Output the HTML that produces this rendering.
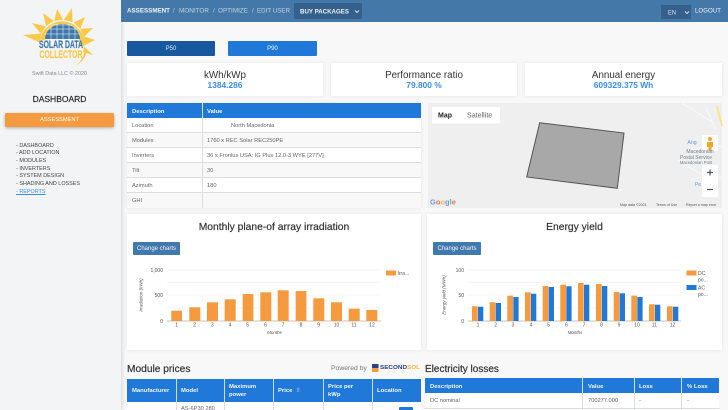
<!DOCTYPE html>
<html><head><meta charset="utf-8"><style>
html,body{margin:0;padding:0;width:728px;height:410px;overflow:hidden;background:#f8f8f8}
body{font-family:"Liberation Sans",sans-serif;position:relative;filter:blur(.35px)}
.a{position:absolute;white-space:nowrap}
.c{text-align:center}
.card{position:absolute;background:#fff;box-shadow:0 0 4px rgba(0,0,0,.08)}
.cell{position:absolute;font-size:5.7px;color:#666;line-height:16.5px;height:15px;white-space:nowrap}
.line{position:absolute;background:#ddd}
.hd{position:absolute;background:#2079d9}
.th{position:absolute;color:#f2f7fd;font-weight:bold;font-size:5.9px;white-space:nowrap;line-height:8px}
.nav{position:absolute;left:16px;font-size:5.45px;line-height:8px;height:8px;color:#444;white-space:nowrap}
.tt{-webkit-text-stroke:.2px #333;color:#333}
svg{position:absolute;left:0;top:0}
svg text{font-family:"Liberation Sans",sans-serif}
</style></head><body>

<div class="a" style="left:0;top:0;width:121px;height:410px;background:#f2f4f6;box-shadow:1px 0 4px rgba(0,0,0,.15)"></div>
<div class="a" style="left:121px;top:0;width:607px;height:22px;background:#4478a8"></div>

<svg width="121" height="70" viewBox="0 0 121 70">
<path fill="#fbc94a" d="M23 35L41.200 33.600 39.600 42.400ZM32 23L45.800 26.400 41 34ZM43 13L53.700 21 46.100 26ZM57 9L63.100 19.500 54.300 20.900ZM72 8L72.500 22.200 63.900 19.600ZM85 17L80.300 28.800 73.700 22.600ZM93 28L83.800 37.100 80.200 28.900ZM95 40L84.300 45.200 83.700 36.200ZM93 55L83 52 84 46.500ZM76 66Q83 60 85 50L87 51Q85 60 76 66Z"/>
<path fill="none" stroke="#fbc94a" stroke-width="5" d="M42.500 40A20 20 0 0 1 82 46"/>
<path fill="#3f78ad" d="M45 39A17.500 15 0 0 1 80 39Z"/>
<path stroke="#fff" stroke-width=".5" fill="none" d="M45 34H80M47 29H78M52 25H72M51 25V39M57 24V39M63 24V39M69 24V39M75 26V39"/>
<text x="39" y="48" font-size="11" font-weight="bold" fill="#3f78ad" stroke="#3f78ad" stroke-width=".2" textLength="44" lengthAdjust="spacingAndGlyphs">SOLAR DATA</text>
<text x="39.500" y="58" font-size="11" font-weight="bold" fill="#fbc94a" stroke="#fbc94a" stroke-width=".2" textLength="43" lengthAdjust="spacingAndGlyphs">COLLECTOR</text>
</svg>

<div class="a c" style="left:0;width:119px;top:71px;font-size:5.400px;color:#888">Swift Data LLC © 2020</div>
<div class="a c" style="left:0;width:119px;top:94px;font-size:8.500px;color:#222;-webkit-text-stroke:.15px #222">DASHBOARD</div>
<div class="a c" style="left:5px;top:113px;width:109px;height:14px;line-height:15.500px;background:#f59a3e;border-radius:1.500px;box-shadow:0 1px 3px rgba(0,0,0,.3);color:#fff;font-size:5.700px">ASSESSMENT</div>
<div class="nav" style="top:142px">- DASHBOARD</div>
<div class="nav" style="top:149px">- ADD LOCATION</div>
<div class="nav" style="top:157px">- MODULES</div>
<div class="nav" style="top:165px">- INVERTERS</div>
<div class="nav" style="top:172px">- SYSTEM DESIGN</div>
<div class="nav" style="top:180px">- SHADING AND LOSSES</div>
<div class="nav" style="top:188px;color:#3a8ee6;text-decoration:underline">- REPORTS</div>

<div class="a" style="left:294px;top:3px;width:68px;height:16px;background:#35608c;border-radius:1.500px"></div>
<div class="a" style="left:661px;top:5px;width:30px;height:14px;background:#35608c;border-radius:1.500px"></div>
<svg width="728" height="22">
<g font-size="6" fill="#c3d3e2">
<text x="127" y="12.300" font-weight="bold" fill="#eef3f8" textLength="43" lengthAdjust="spacingAndGlyphs">ASSESSMENT</text>
<text x="173" y="12.300">/</text>
<text x="179" y="12.300" textLength="30" lengthAdjust="spacingAndGlyphs">MONITOR</text>
<text x="213" y="12.300">/</text>
<text x="218" y="12.300" textLength="30" lengthAdjust="spacingAndGlyphs">OPTIMIZE</text>
<text x="252" y="12.300">/</text>
<text x="257" y="12.300" textLength="33" lengthAdjust="spacingAndGlyphs">EDIT USER</text>
<text x="300" y="13.300" font-weight="bold" fill="#eef3f8" textLength="49" lengthAdjust="spacingAndGlyphs">BUY PACKAGES</text>
<text x="668" y="14.500" fill="#dde7f0" textLength="8" lengthAdjust="spacingAndGlyphs">EN</text>
<text x="695" y="12.300" fill="#eef3f8" textLength="26" lengthAdjust="spacingAndGlyphs">LOGOUT</text>
</g>
<path d="M355 10.500l2 2 2-2M685 11.500l2 2 2-2" fill="none" stroke="#dde7f0" stroke-width=".9"/>
</svg>

<div class="a c" style="left:127px;top:41px;width:88px;height:15px;line-height:16.500px;background:#17589f;border-radius:1px;color:#dfe9f4;font-size:6px">P50</div>
<div class="a c" style="left:228px;top:41px;width:89px;height:15px;line-height:16.500px;background:#2079d9;border-radius:1px;color:#eaf3fc;font-size:6px">P90</div>

<div class="card c" style="left:127px;top:63px;width:196px;height:33px"><div style="font-size:9.800px;color:#333;margin-top:7.500px;line-height:10.500px">kWh/kWp</div><div style="font-size:8.400px;font-weight:bold;color:#3a8ee6;line-height:9px">1384.286</div></div>
<div class="card c" style="left:331px;top:63px;width:186px;height:33px"><div style="font-size:9.800px;color:#333;margin-top:7.500px;line-height:10.500px">Performance ratio</div><div style="font-size:8.400px;font-weight:bold;color:#3a8ee6;line-height:9px">79.800 %</div></div>
<div class="card c" style="left:525px;top:63px;width:197px;height:33px"><div style="font-size:9.800px;color:#333;margin-top:7.500px;line-height:10.500px">Annual energy</div><div style="font-size:8.400px;font-weight:bold;color:#3a8ee6;line-height:9px">609329.375 Wh</div></div>

<div class="card" style="left:127px;top:103px;width:294px;height:105px"></div>
<div class="hd" style="left:127px;top:103px;width:294px;height:15px"></div>
<div class="a" style="left:127px;top:133px;width:294px;height:14px;background:#f8f8f8"></div>
<div class="a" style="left:127px;top:163px;width:294px;height:14px;background:#f8f8f8"></div>
<div class="a" style="left:127px;top:193px;width:294px;height:15px;background:#f8f8f8"></div>
<div class="line" style="left:127px;top:132px;width:294px;height:1px"></div>
<div class="line" style="left:127px;top:147px;width:294px;height:1px"></div>
<div class="line" style="left:127px;top:162px;width:294px;height:1px"></div>
<div class="line" style="left:127px;top:177px;width:294px;height:1px"></div>
<div class="line" style="left:127px;top:192px;width:294px;height:1px"></div>
<div class="line" style="left:202px;top:103px;width:1px;height:105px"></div>
<div class="th" style="left:132px;top:107.500px">Description</div>
<div class="th" style="left:207px;top:107.500px">Value</div>
<div class="cell" style="left:132px;top:118px">Location</div><div class="cell" style="left:231px;top:118px">North Macedonia</div>
<div class="cell" style="left:132px;top:133px">Modules</div><div class="cell" style="left:207px;top:133px">1760 x REC Solar REC250PE</div>
<div class="cell" style="left:132px;top:148px">Inverters</div><div class="cell" style="left:207px;top:148px">36 x Fronius USA: IG Plus 12.0-3 WYE [277V]</div>
<div class="cell" style="left:132px;top:163px">Tilt</div><div class="cell" style="left:207px;top:163px">30</div>
<div class="cell" style="left:132px;top:178px">Azimuth</div><div class="cell" style="left:207px;top:178px">180</div>
<div class="cell" style="left:132px;top:193px">GHI</div>

<div class="a" style="left:428px;top:103px;width:294px;height:105px;background:#efefef;overflow:hidden"></div>
<svg width="728" height="410" style="left:0;top:0">
<path d="M682 103L712 122M706 108L716 130M690 150L722 146M678 160L704 176 690 180M700 172L722 178" stroke="#fafafa" stroke-width=".8" fill="none"/>
<path d="M717 106L722 126" stroke="#fde293" stroke-width="2" fill="none"/>
<polygon points="539.700,122.700 624,133 617.300,188.300 526.700,177" fill="#a8a8a8" stroke="#555" stroke-width="1"/>
<rect x="432" y="107" width="68" height="16.500" fill="#fff"/>
<text x="438" y="117.300" font-size="7" font-weight="bold" fill="#222">Map</text>
<text x="467" y="117.300" font-size="7.100" fill="#666">Satellite</text>
<rect x="702" y="135" width="16" height="16" fill="#fff"/>
<circle cx="710" cy="139" r="2" fill="#f4a623"/>
<path d="M707 142h6v5h-1.500v4h-3v-4H707Z" fill="#f4a623"/>
<rect x="702" y="165" width="16" height="32" fill="#fff"/>
<path d="M707 172.500h6M710 169.500v6M707 189.500h6" stroke="#555" stroke-width="1.200"/>
<text x="692" y="144" font-size="5.200" fill="#5b9bea" text-anchor="middle">Ang</text>
<text x="700" y="153" font-size="5" fill="#6d7f8c" text-anchor="middle">Macedonian</text>
<text x="696" y="159" font-size="5" fill="#6d7f8c" text-anchor="middle">Postal Service</text>
<text x="696" y="164" font-size="4.200" fill="#6d7f8c" text-anchor="middle">Macedonian Post</text>
<text x="698" y="186" font-size="5" fill="#5b9bea" text-anchor="middle">Pe</text>
<text x="430" y="204.500" font-size="7.500" font-weight="bold"><tspan fill="#6a9cea">G</tspan><tspan fill="#e57368">o</tspan><tspan fill="#edc24d">o</tspan><tspan fill="#6a9cea">g</tspan><tspan fill="#6dbb78">l</tspan><tspan fill="#e57368">e</tspan></text>
<text x="620" y="206" font-size="3.600" fill="#555">Map data ©2021</text>
<text x="656" y="206" font-size="3.600" fill="#555">Terms of Use</text>
<text x="686" y="206" font-size="3.600" fill="#555">Report a map error</text>
</svg>

<div class="card" style="left:127px;top:214px;width:294px;height:136px"></div>
<div class="card" style="left:427px;top:214px;width:295px;height:136px"></div>
<div class="a c tt" style="left:127px;top:222px;width:294px;font-size:10.300px">Monthly plane-of array irradiation</div>
<div class="a c tt" style="left:427px;top:222px;width:295px;font-size:10.300px">Energy yield</div>
<div class="a c" style="left:133px;top:242px;width:47px;height:13px;line-height:14px;background:#4279ad;border-radius:1px;color:#eef3f8;font-size:6px">Change charts</div>
<div class="a c" style="left:433px;top:242px;width:48px;height:13px;line-height:14px;background:#4279ad;border-radius:1px;color:#eef3f8;font-size:6px">Change charts</div>

<svg width="728" height="410">
<g stroke="#eee" stroke-width=".6"><path d="M167 270H381M167 295H381M167 282.500H381M167 308H381"/><path d="M468 270H681M468 295H681M468 282.500H681M468 308H681"/></g>
<g stroke="#c4c4c4" stroke-width=".9"><path d="M167 321H381M468 321H681"/></g>
<g fill="#f59a3e">
<rect x="171.300" y="310.700" width="10.700" height="10.300"/><rect x="189.300" y="307.300" width="11" height="13.700"/><rect x="207" y="302.300" width="11" height="18.700"/><rect x="224.700" y="299.300" width="11" height="21.700"/><rect x="242.700" y="294" width="10.700" height="27"/><rect x="260.300" y="292.300" width="11" height="28.700"/><rect x="277.700" y="290.300" width="11" height="30.700"/><rect x="295.700" y="291" width="10.700" height="30"/><rect x="313.300" y="298.300" width="11" height="22.700"/><rect x="331" y="302.300" width="11" height="18.700"/><rect x="348.700" y="308.700" width="11" height="12.300"/><rect x="366.300" y="310" width="11" height="11"/>
<rect x="386" y="270.500" width="10" height="5"/>
<rect x="472" y="306.300" width="5.700" height="14.700"/><rect x="489.700" y="302.300" width="5.700" height="18.700"/><rect x="507.300" y="295.700" width="5.700" height="25.300"/><rect x="525" y="292.300" width="5.700" height="28.700"/><rect x="542.700" y="286" width="5.700" height="35"/><rect x="560.300" y="284.700" width="5.700" height="36.300"/><rect x="578" y="283" width="5.700" height="38"/><rect x="596" y="284" width="5.700" height="37"/><rect x="613.700" y="292" width="5.700" height="29"/><rect x="631.300" y="295.700" width="5.700" height="25.300"/><rect x="649" y="304.300" width="5.700" height="16.700"/><rect x="667" y="306.300" width="5.700" height="14.700"/>
<rect x="686.500" y="270.500" width="10" height="5"/>
</g>
<g fill="#2079d9">
<rect x="478" y="306.700" width="5.300" height="14.300"/><rect x="495.700" y="303" width="5.300" height="18"/><rect x="513.300" y="297" width="5.300" height="24"/><rect x="531" y="293.700" width="5.300" height="27.300"/><rect x="548.700" y="287" width="5.300" height="34"/><rect x="566.300" y="286.300" width="5.300" height="34.700"/><rect x="584" y="284.700" width="5.300" height="36.300"/><rect x="602" y="286" width="5.300" height="35"/><rect x="619.700" y="293.300" width="5.300" height="27.700"/><rect x="637.300" y="297" width="5.300" height="24"/><rect x="655" y="304.700" width="5.300" height="16.300"/><rect x="673" y="306.700" width="5.300" height="14.300"/>
<rect x="686.500" y="285" width="10" height="5"/>
</g>
<g font-size="5" fill="#555" text-anchor="end">
<text x="163" y="272">1,000</text><text x="163" y="297">500</text><text x="163" y="323">0</text>
<text x="464" y="272">100</text><text x="464" y="297">50</text><text x="464" y="323">0</text>
</g>
<g font-size="5" fill="#555" text-anchor="middle">
<text x="176.700" y="326.500">1</text><text x="194.500" y="326.500">2</text><text x="212.300" y="326.500">3</text><text x="230" y="326.500">4</text><text x="247.700" y="326.500">5</text><text x="265.500" y="326.500">6</text><text x="283" y="326.500">7</text><text x="301" y="326.500">8</text><text x="318.700" y="326.500">9</text><text x="336.500" y="326.500">10</text><text x="354" y="326.500">11</text><text x="372" y="326.500">12</text>
<text x="478" y="326.500">1</text><text x="495.700" y="326.500">2</text><text x="513" y="326.500">3</text><text x="531" y="326.500">4</text><text x="548.500" y="326.500">5</text><text x="566.500" y="326.500">6</text><text x="584" y="326.500">7</text><text x="601.500" y="326.500">8</text><text x="619" y="326.500">9</text><text x="637" y="326.500">10</text><text x="654.500" y="326.500">11</text><text x="672.500" y="326.500">12</text>
<text x="274.500" y="334" font-style="italic" font-size="4.500">Months</text>
<text x="575" y="334" font-style="italic" font-size="4.500">Months</text>
<text transform="translate(142.500,295) rotate(-90)" font-style="italic" font-size="4.500">Irradiation (kWh)</text>
<text transform="translate(445.500,295) rotate(-90)" font-style="italic" font-size="4.500">Energy yield (MWh)</text>
</g>
<g font-size="5" fill="#555">
<text x="397.500" y="275">Irra...</text>
<text x="698" y="275">DC</text><text x="698" y="281.500">po...</text>
<text x="698" y="289.500">AC</text><text x="698" y="296">po...</text>
</g>
</svg>

<div class="a tt" style="left:127px;top:363.500px;font-size:10.200px">Module prices</div>
<div class="a" style="left:331px;top:364.500px;font-size:6.800px;color:#777">Powered by</div>
<svg width="728" height="410">
<rect x="372" y="364" width="6.500" height="4" fill="#24408e"/><rect x="372" y="368" width="6.500" height="4" fill="#f59a3e"/>
<text x="380" y="369" font-size="5.600" font-weight="bold" fill="#24408e" textLength="40" lengthAdjust="spacingAndGlyphs">SECOND<tspan fill="#f0b53c">SOL</tspan></text>
</svg>
<div class="a tt" style="left:425px;top:363.500px;font-size:10px">Electricity losses</div>

<div class="a" style="left:127px;top:402px;width:294px;height:8px;background:#fff"></div>
<div class="hd" style="left:127px;top:379px;width:294px;height:23px"></div>
<div class="line" style="left:176px;top:379px;width:.7px;height:31px;background:#cfdff2"></div>
<div class="line" style="left:224px;top:379px;width:.7px;height:31px;background:#cfdff2"></div>
<div class="line" style="left:273px;top:379px;width:.7px;height:31px;background:#cfdff2"></div>
<div class="line" style="left:323px;top:379px;width:.7px;height:31px;background:#cfdff2"></div>
<div class="line" style="left:372px;top:379px;width:.7px;height:31px;background:#cfdff2"></div>
<div class="th" style="left:132px;top:387px">Manufacturer</div>
<div class="th" style="left:181px;top:387px">Model</div>
<div class="th" style="left:229px;top:383px;white-space:normal;width:40px">Maximum power</div>
<div class="th" style="left:278px;top:387px">Price &nbsp;<span style="color:#7aa8d8">⇕</span></div>
<div class="th" style="left:328px;top:383px;white-space:normal;width:30px">Price per kWp</div>
<div class="th" style="left:377px;top:387px">Location</div>
<div class="a" style="left:181px;top:405.500px;font-size:5.700px;color:#666">AS-6P30 280</div>
<div class="a" style="left:399px;top:406.500px;width:14px;height:6px;background:#2079d9;border-radius:1px"></div>

<div class="a" style="left:425px;top:393px;width:294px;height:17px;background:#fff"></div>
<div class="hd" style="left:425px;top:378px;width:294px;height:15px"></div>
<div class="line" style="left:425px;top:408px;width:294px;height:1px"></div>
<div class="line" style="left:582px;top:378px;width:.7px;height:32px;background:#d5dfe9"></div>
<div class="line" style="left:634px;top:378px;width:.7px;height:32px;background:#d5dfe9"></div>
<div class="line" style="left:681px;top:378px;width:.7px;height:32px;background:#d5dfe9"></div>
<div class="th" style="left:430px;top:383px">Description</div>
<div class="th" style="left:588px;top:383px">Value</div>
<div class="th" style="left:639px;top:383px">Loss</div>
<div class="th" style="left:687px;top:383px">% Loss</div>
<div class="cell" style="left:430px;top:393px">DC nominal</div>
<div class="cell" style="left:588px;top:393px">700277.000</div>
<div class="cell" style="left:639px;top:393px">-</div>
<div class="cell" style="left:687px;top:393px">-</div>

</body></html>
